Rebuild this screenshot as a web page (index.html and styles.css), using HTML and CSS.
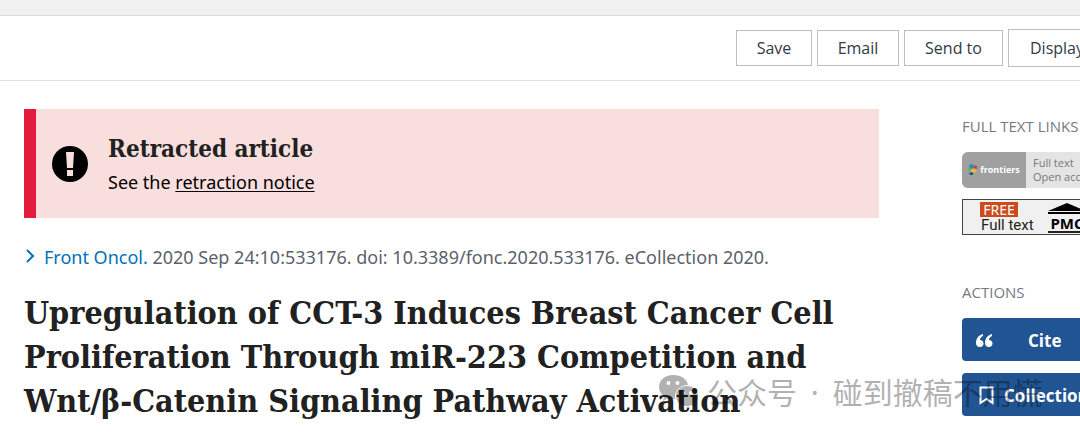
FILE: index.html
```html
<!DOCTYPE html>
<html lang="en">
<head>
<meta charset="utf-8">
<title>Upregulation of CCT-3 Induces Breast Cancer Cell Proliferation</title>
<link rel="stylesheet" href="styles.css">
</head>
<body>
<div class="page">
  <div class="topbar"></div>
  <header class="toolbar">
    <button class="tool save" type="button">Save</button>
    <button class="tool email" type="button">Email</button>
    <button class="tool send" type="button">Send to</button>
    <button class="tool display" type="button">Display options</button>
  </header>
  <div class="columns">
    <main class="article">
      <section class="notice">
        <svg class="notice-icon" viewBox="0 0 36 36" aria-hidden="true">
          <circle cx="18" cy="18" r="18"/>
          <path fill="#f9dede" d="M14 6h8l-1 16h-6zM15 24h6v6h-6z"/>
        </svg>
        <div>
          <h2 class="notice-title">Retracted article</h2>
          <p class="notice-text">See the <a class="notice-link" href="#notice">retraction notice</a></p>
        </div>
      </section>
      <p class="citation">
        <svg class="chevron" viewBox="0 0 12 18" aria-hidden="true"><path d="M3 2l6 6-6 6"/></svg>
        <span><a class="journal" href="#journal">Front Oncol.</a> 2020 Sep 24:10:533176. doi: 10.3389/fonc.2020.533176. eCollection 2020.</span>
      </p>
      <h1 class="title">Upregulation of CCT-3 Induces Breast Cancer Cell<br>Proliferation Through miR-223 Competition and<br>Wnt/β-Catenin Signaling Pathway Activation</h1>
    </main>
    <aside class="side">
      <h3 class="side-heading">FULL TEXT LINKS</h3>
      <a class="frontiers" href="#frontiers">
        <span class="frontiers-brand">
          <svg class="frontiers-logo" viewBox="0 0 10 12" aria-hidden="true">
            <path fill="#2788c9" d="M1 1l4-1 1 4-4 1z"/>
            <path fill="#d8412f" d="M6 1l3 1v3L6 4z"/>
            <path fill="#71b843" d="M0 3l3 2-1 3-2-1z"/>
            <path fill="#f5c51c" d="M4 5l5 1-3 3-3-1z"/>
            <path fill="#204f9d" d="M1 9l4-1v3H2z"/>
          </svg>
          <span>frontiers</span>
        </span>
        <span class="frontiers-text">Full text<br>Open access</span>
      </a>
      <a class="pmc" href="#pmc">
        <span class="pmc-free"><span class="free">FREE</span><span class="full">Full text</span></span>
        <span class="pmc-brand">
          <svg class="pmc-roof" viewBox="0 0 38 13" aria-hidden="true"><path d="M0 9L19 1l19 8zM0 10h38v2H0z"/></svg>
          <span class="pmc-name">PMC</span>
        </span>
      </a>
      <h3 class="side-heading actions-heading">ACTIONS</h3>
      <div class="actions">
        <button class="action cite" type="button">
          <svg class="quote" viewBox="0 0 17 13" aria-hidden="true"><path d="M7 0C3 1 0 4 0 9c0 2 1 4 4 4 2 0 3.500-1.500 3.500-3.500S6 6 4 6c0-2 1-3 3-4zM16 0c-4 1-7 4-7 9 0 2 1 4 4 4 2 0 3.500-1.500 3.500-3.500S15 6 13 6c0-2 1-3 3-4z"/></svg>
          <span>Cite</span>
        </button>
        <button class="action collections" type="button">
          <svg class="bookmark" viewBox="0 0 15 19" aria-hidden="true"><path d="M1.500 1.500h12v15.500l-6-4-6 4z"/></svg>
          <span>Collections</span>
        </button>
      </div>
    </aside>
  </div>
  <div class="watermark">
    <svg class="wechat" viewBox="0 0 40 34" aria-hidden="true">
      <path fill-rule="evenodd" d="M14 0C6 0 0 5 0 12c0 4 2 7 5 9l-1 5 5-3c2 1 5 1 7 1-1-8 5-14 13-14C28 4 22 0 14 0zM9.500 6a2 2 0 1 1 0 4 2 2 0 0 1 0-4zm9 0a2 2 0 1 1 0 4 2 2 0 0 1 0-4z"/>
      <path fill-rule="evenodd" d="M28 11c-6 0-11 4-11 10s5 10 11 10c2 0 3 0 5-1l4 3-1-5c2-2 3-4 3-7 0-6-5-10-11-10zm-4 5a2 2 0 1 1 0 4 2 2 0 0 1 0-4zm8 0a2 2 0 1 1 0 4 2 2 0 0 1 0-4z"/>
    </svg>
    <span>公众号<span class="dot"> · </span>碰到撤稿不用慌</span>
  </div>
</div>
</body>
</html>
```
FILE: styles.css
```css
* { box-sizing: border-box; }
body { margin: 0; background: #fff; color: #212121; font-family: "Noto Sans", "Open Sans", sans-serif; }
h1, h2, h3, p { margin: 0; }
.page { position: relative; overflow: hidden; }
.topbar { height: 16px; background: #f0f0f0; border-bottom: 1px solid #dcdcdc; }
.toolbar { display: flex; align-items: center; justify-content: flex-end; gap: 5px; height: 65px; border-bottom: 1px solid #dfdfdf; }
.tool { flex: none; height: 36px; padding: 0; border: 1px solid #bcbec3; background: #fff; color: #323a45; font: 16px "Open Sans", sans-serif; }
.save { width: 76px; }
.email { width: 82px; }
.send { width: 99px; }
.display { width: 72px; height: 38px; padding-left: 21px; border-right: 0; text-align: left; white-space: nowrap; overflow: hidden; }
.columns { display: flex; padding: 28px 0 16px 24px; }
.article { flex: 1; min-width: 0; margin-right: 83px; }
.notice { display: flex; align-items: center; gap: 20px; min-height: 109px; padding: 0 16px; border-left: 12px solid #e31c3d; background: #f9dede; }
.notice-icon { width: 36px; height: 36px; flex: none; }
.notice-title { font: bold 24px/36px "DejaVu Serif Condensed", "Liberation Serif", serif; }
.notice-text { color: #000; font-size: 18px; line-height: 30px; }
.notice-link { color: inherit; text-underline-offset: 2px; text-decoration-thickness: 1px; }
.citation { display: flex; align-items: center; gap: 8px; margin-top: 25px; color: #5b616b; font-size: 18px; line-height: 28px; }
.chevron { width: 12px; height: 18px; flex: none; fill: none; stroke: #0071bc; stroke-width: 2; }
.journal { color: #0071bc; text-decoration: none; }
.title { margin-top: 20px; font: bold 32px/44px "DejaVu Serif Condensed", "Liberation Serif", serif; white-space: nowrap; }
.side { flex: 0 0 118px; overflow: hidden; white-space: nowrap; }
.side-heading { margin-top: 7px; color: #747a84; font: 15px/20px "Open Sans", sans-serif; }
.frontiers { display: flex; width: 160px; height: 36px; margin-top: 16px; overflow: hidden; border-radius: 6px; background: #e4e4e4; color: #777; font: 11px/14px "Open Sans", sans-serif; text-decoration: none; }
.frontiers-brand { display: flex; flex: 0 0 64px; align-items: center; justify-content: center; gap: 2px; background: #a0a0a0; color: #fff; font-weight: bold; font-size: 9px; }
.frontiers-logo { width: 10px; height: 12px; }
.frontiers-text { padding: 4px 7px; }
.pmc { display: flex; width: 140px; height: 36px; margin-top: 11px; padding: 2px 0 0 17px; gap: 12px; border: 1px solid #444; background: #f0f0f0; color: #222; text-decoration: none; }
.pmc-free { display: flex; flex-direction: column; align-items: flex-start; width: 56px; font: 15px/17px "Noto Sans", sans-serif; }
.free { width: 38px; height: 15px; background: #cb4a1e; color: #fff; font-size: 14px; line-height: 15px; text-align: center; }
.full { padding-left: 1px; font-family: Roboto, sans-serif; }
.pmc-brand { width: 38px; }
.pmc-roof { display: block; width: 38px; height: 13px; }
.pmc-name { display: block; border-bottom: 2px solid #222; color: #000; font: bold 15px/16px "Open Sans", sans-serif; text-align: center; }
.actions-heading { margin-top: 47px; }
.actions { display: flex; flex-direction: column; gap: 12px; margin-top: 16px; }
.action { display: flex; align-items: center; width: 160px; height: 43px; padding: 2px 14px 0; border: 0; border-radius: 4px; background: #205493; color: #fff; font: bold 17px "Open Sans", sans-serif; }
.cite { gap: 35px; }
.collections { gap: 10px; padding-left: 17px; }
.quote { width: 17px; height: 13px; flex: none; fill: #fff; }
.bookmark { width: 15px; height: 19px; flex: none; fill: none; stroke: #fff; stroke-width: 2; }
.watermark { position: absolute; top: 372px; left: 659px; display: flex; align-items: center; gap: 8px; color: #000; opacity: 0.3; font: 30px/38px "Noto Sans CJK SC", sans-serif; white-space: nowrap; }
.dot { padding: 0 6px; font-family: "Noto Sans", sans-serif; }
.wechat { width: 40px; height: 34px; }
```
